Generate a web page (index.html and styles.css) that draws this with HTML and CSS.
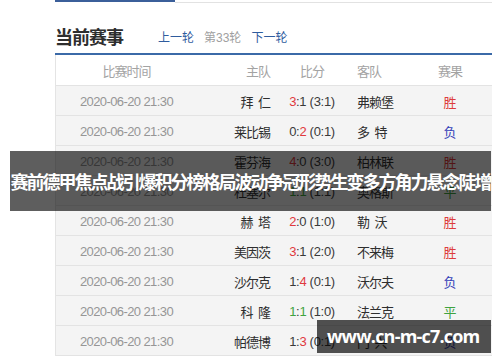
FILE: index.html
```html
<!DOCTYPE html>
<html lang="zh-CN">
<head>
<meta charset="utf-8">
<title>当前赛事</title>
<link rel="stylesheet" href="styles.css">
</head>
<body>
<div class="page">
  <div class="topbar"><span class="topbar-active"></span><span class="topbar-rest"></span></div>
  <div class="heading">
    <h2 class="title">当前赛事</h2>
    <nav class="rounds">
      <a class="round-link">上一轮</a>
      <span class="round-current">第33轮</span>
      <a class="round-link">下一轮</a>
    </nav>
  </div>
  <div class="table">
    <div class="row head">
      <span class="c-time">比赛时间</span><span class="c-home">主队</span><span class="c-score">比分</span><span class="c-away">客队</span><span class="c-res">赛果</span>
    </div>
    <div class="row">
      <span class="c-time">2020-06-20 21:30</span><span class="c-home">拜 仁</span><span class="c-score"><i class="red">3</i>:1 (3:1)</span><span class="c-away">弗赖堡</span><span class="c-res win">胜</span>
    </div>
    <div class="row">
      <span class="c-time">2020-06-20 21:30</span><span class="c-home">莱比锡</span><span class="c-score">0:<i class="red">2</i> (0:1)</span><span class="c-away">多 特</span><span class="c-res lose">负</span>
    </div>
    <div class="row">
      <span class="c-time">2020-06-20 21:30</span><span class="c-home">霍芬海</span><span class="c-score"><i class="red">4</i>:0 (3:0)</span><span class="c-away">柏林联</span><span class="c-res win">胜</span>
    </div>
    <div class="row">
      <span class="c-time">2020-06-20 21:30</span><span class="c-home">杜塞尔</span><span class="c-score"><i class="green">1</i>:<i class="green">1</i> (1:1)</span><span class="c-away">奥格斯</span><span class="c-res draw">平</span>
    </div>
    <div class="row">
      <span class="c-time">2020-06-20 21:30</span><span class="c-home">赫 塔</span><span class="c-score"><i class="red">2</i>:0 (1:0)</span><span class="c-away">勒 沃</span><span class="c-res win">胜</span>
    </div>
    <div class="row">
      <span class="c-time">2020-06-20 21:30</span><span class="c-home">美因茨</span><span class="c-score"><i class="red">3</i>:1 (2:0)</span><span class="c-away">不来梅</span><span class="c-res win">胜</span>
    </div>
    <div class="row">
      <span class="c-time">2020-06-20 21:30</span><span class="c-home">沙尔克</span><span class="c-score">1:<i class="red">4</i> (0:1)</span><span class="c-away">沃尔夫</span><span class="c-res lose">负</span>
    </div>
    <div class="row">
      <span class="c-time">2020-06-20 21:30</span><span class="c-home">科 隆</span><span class="c-score"><i class="green">1</i>:<i class="green">1</i> (1:0)</span><span class="c-away">法兰克</span><span class="c-res draw">平</span>
    </div>
    <div class="row">
      <span class="c-time">2020-06-20 21:30</span><span class="c-home">帕德博</span><span class="c-score">1:<i class="red">3</i> (0:1)</span><span class="c-away">门 兴</span><span class="c-res lose">负</span>
    </div>
  </div>
</div>
<div class="banner">赛前德甲焦点战引爆积分榜格局波动争冠形势生变多方角力悬念陡增</div>
<div class="watermark">www.cn-m-c7.com</div>
</body>
</html>
```

FILE: styles.css
```css
html, body {
  margin: 0;
  padding: 0;
  background: #ffffff;
}
body {
  width: 500px;
  height: 362px;
  overflow: hidden;
  position: relative;
  font-family: "Liberation Sans", "Noto Sans CJK SC", sans-serif;
  color: #333333;
}
.page {
  margin-left: 55px;
  width: 437px;
}
.topbar {
  display: flex;
  height: 3px;
}
.topbar-active {
  width: 120px;
  height: 2px;
  background: #3b5f9a;
}
.topbar-rest {
  flex: 1;
  height: 2px;
  border-bottom: 1px solid #e2e2e2;
}
.heading {
  display: flex;
  align-items: center;
  padding-top: 20px;
  padding-bottom: 4px;
  height: 26px;
  border-bottom: 2px solid #3b6aa8;
}
.title {
  margin: 0;
  font-family: "Noto Sans CJK SC", sans-serif;
  font-size: 18px;
  font-weight: 700;
  letter-spacing: -1px;
  line-height: 26px;
  color: #2e2e2e;
}
.rounds {
  display: flex;
  gap: 10px;
  margin-left: 35px;
  margin-top: 3px;
  font-size: 12px;
  line-height: 16px;
}
.round-link {
  color: #2f5c9e;
}
.round-current {
  color: #a0a0a0;
}
.table {
  border-left: 1px solid #e4e4e4;
}
.row {
  display: grid;
  grid-template-columns: 141px 73px 84px 54px 84px;
  align-items: center;
  height: 28px;
  padding-top: 1px;
  box-sizing: content-box;
  border-bottom: 1px solid #e3e3e3;
  background: #f4f4f4;
  font-size: 13px;
  letter-spacing: -0.6px;
}
.row.head {
  height: 30px;
  padding-top: 0;
  background: #ffffff;
  color: #a3a3a3;
}
.row > span {
  white-space: pre;
}
.c-time {
  text-align: center;
  color: #969696;
}
.head .c-time,
.head .c-home,
.head .c-score,
.head .c-away,
.head .c-res {
  color: #a3a3a3;
  letter-spacing: -1px;
}
.c-home {
  text-align: right;
  color: #2e2e2e;
  letter-spacing: -1px;
  word-spacing: 3px;
}
.c-score {
  text-align: center;
  color: #3a3a3a;
  letter-spacing: -0.3px;
}
.c-away {
  padding-left: 3px;
  color: #2e2e2e;
  letter-spacing: -1px;
  word-spacing: 3px;
}
.c-res {
  text-align: center;
  letter-spacing: 0;
}
.c-score i {
  font-style: normal;
}
.red {
  color: #e0393e;
}
.green {
  color: #3fa33f;
}
.win {
  color: #dd3b3b;
}
.lose {
  color: #3442b8;
}
.draw {
  color: #3fa33f;
}
.banner {
  position: absolute;
  left: 10px;
  top: 151px;
  width: 481px;
  height: 60px;
  background: rgba(0, 0, 0, 0.63);
  color: #ffffff;
  font-family: "Noto Sans CJK SC", sans-serif;
  font-weight: 700;
  font-size: 18px;
  letter-spacing: -2px;
  line-height: 60px;
  text-align: center;
  white-space: nowrap;
}
.watermark {
  position: absolute;
  left: 317px;
  top: 320px;
  width: 164px;
  height: 33px;
  padding-left: 10px;
  background: rgba(0, 0, 0, 0.68);
  color: #ffffff;
  font-family: "Open Sans", sans-serif;
  font-weight: 700;
  font-size: 18px;
  letter-spacing: -0.8px;
  line-height: 33px;
  white-space: nowrap;
}
```
